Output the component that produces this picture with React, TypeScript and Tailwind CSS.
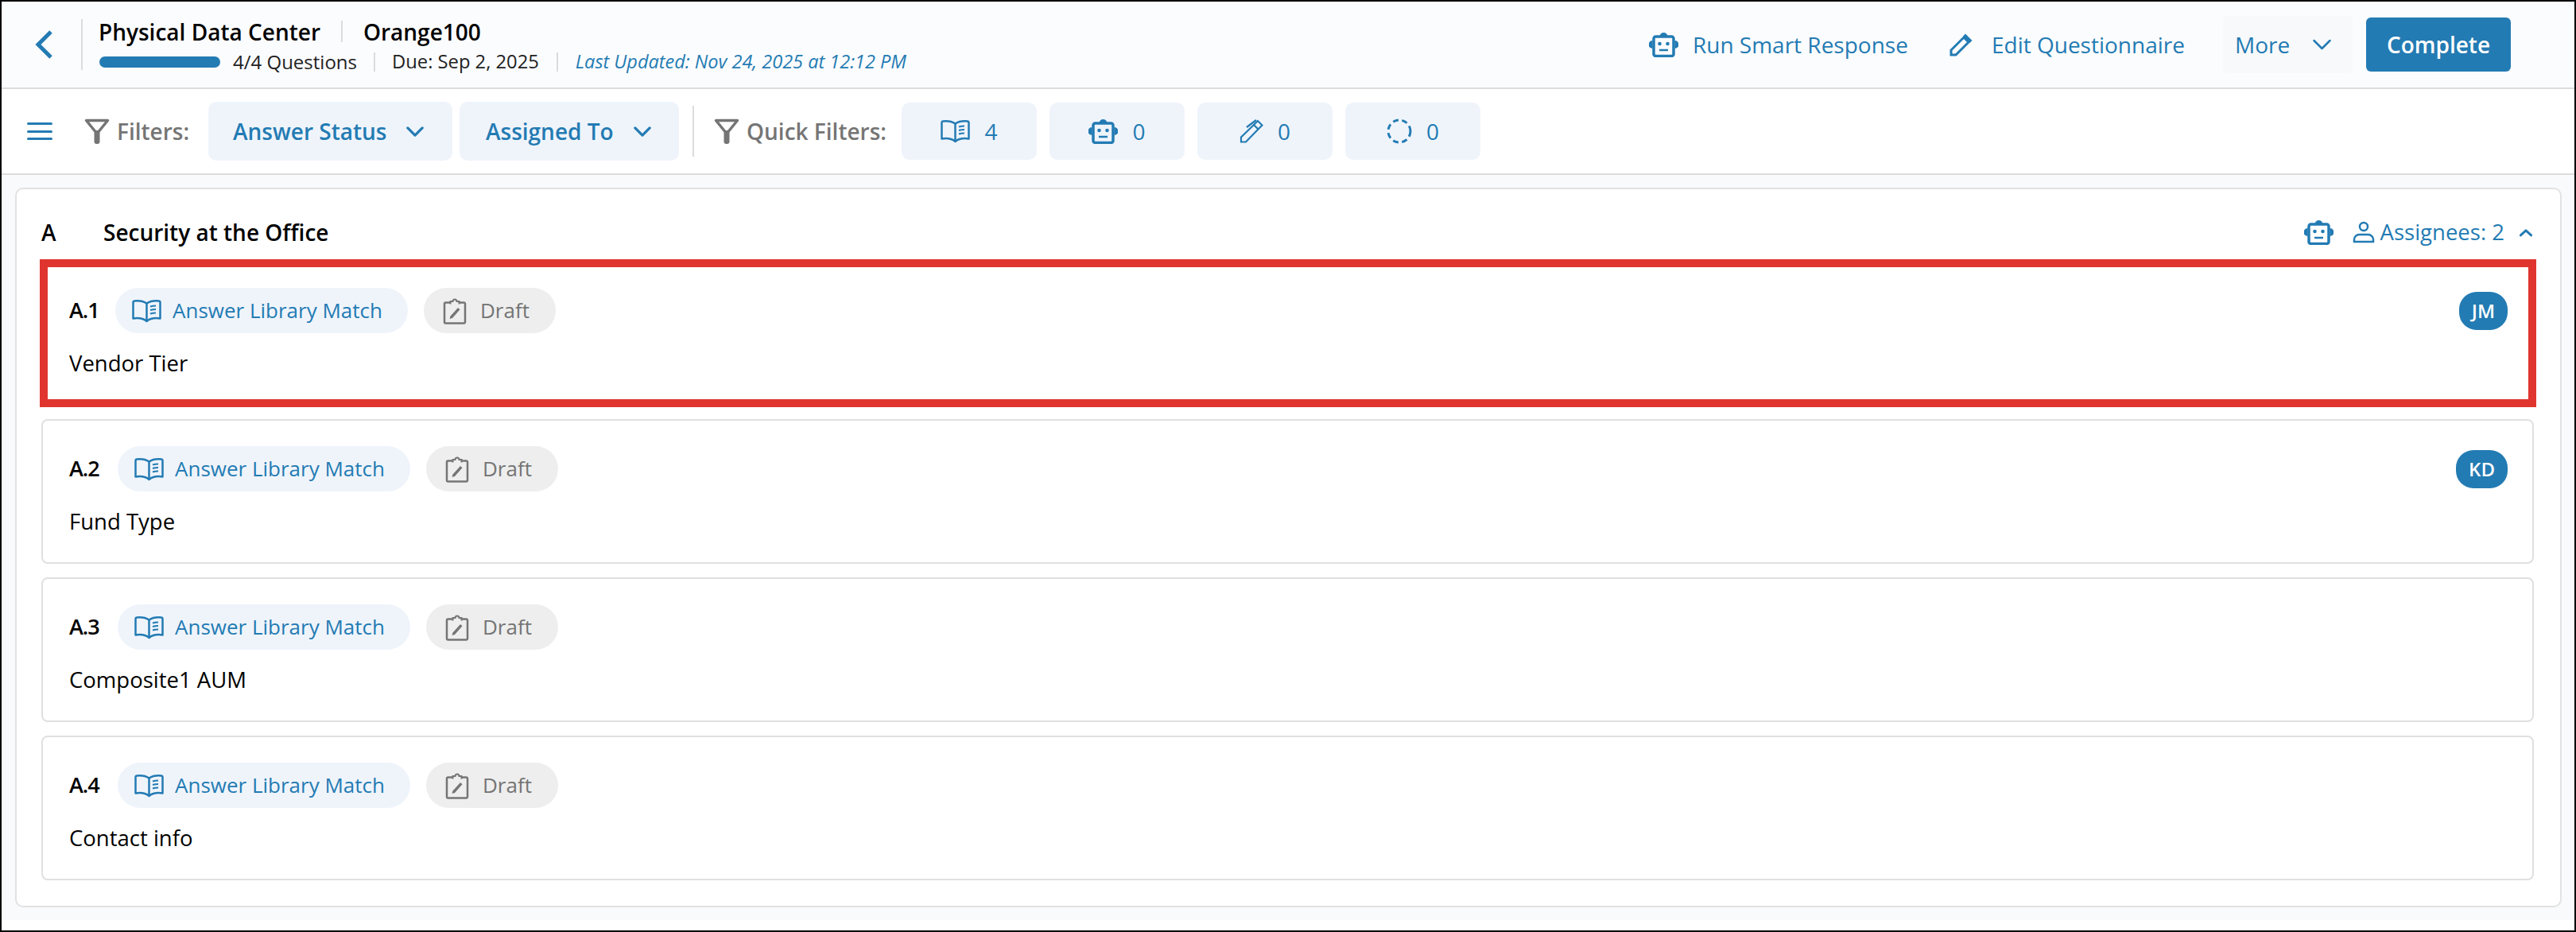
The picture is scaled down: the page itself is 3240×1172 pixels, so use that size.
import type { ReactNode } from "react";

const BLUE = "#237bb3";
const GRAY = "#757575";

function RobotIcon({ className }: { className?: string }) {
  return (
    <svg className={className} viewBox="0 0 37 32" fill="none" stroke={BLUE}>
      <path d="M13.500 6a5 5 0 0 1 10 0z" fill={BLUE} stroke="none" />
      <rect x="6" y="6" width="25" height="24.500" rx="2.500" strokeWidth="3.500" />
      <path d="M4.500 11a5 5 0 0 0 0 10zM32.500 11a5 5 0 0 1 0 10z" fill={BLUE} stroke="none" />
      <circle cx="13.500" cy="15" r="2.300" fill={BLUE} stroke="none" />
      <circle cx="23.500" cy="15" r="2.300" fill={BLUE} stroke="none" />
      <path d="M13 23h11" strokeWidth="2.500" />
    </svg>
  );
}

function BookIcon({ className }: { className?: string }) {
  return (
    <svg className={className} viewBox="0 0 37 30" fill="none" stroke={BLUE} strokeWidth="2.500" strokeLinejoin="round">
      <path d="M18.500 5.500C14 2.500 8 2 3 2.500c-1 .1-1.500.7-1.500 1.500v20.500c5.500-.8 12.500-.3 17 3.500 4.500-3.800 11.500-4.300 17-3.500V4c0-.8-.5-1.400-1.500-1.500-5-.5-11 0-15.500 3z" />
      <path d="M18.500 5.500V28" />
      <path d="M23 9.500c2.200-.8 4.400-1.100 7-1.100M23 14c2.200-.8 4.400-1.100 7-1.100M23 18.500c2.200-.8 4.400-1.100 7-1.100" strokeWidth="2" />
    </svg>
  );
}

function ClipboardIcon({ className }: { className?: string }) {
  return (
    <svg className={className} viewBox="0 0 30 34" fill="none" stroke={GRAY} strokeWidth="2.500">
      <path d="M9.500 6.500H3.500a1.500 1.500 0 0 0-1.500 1.500v23a1.500 1.500 0 0 0 1.500 1.500h23a1.500 1.500 0 0 0 1.500-1.500V8a1.500 1.500 0 0 0-1.500-1.500h-6" />
      <path d="M9.500 8.500V5h3a2.500 2.500 0 0 1 5 0h3v3.500" strokeWidth="2" />
      <path d="M8.500 27l1-3.500L19 13l2.500 2.300L12 26z" fill={GRAY} stroke="none" />
    </svg>
  );
}

function FilterIcon({ className }: { className?: string }) {
  return (
    <svg className={className} viewBox="0 0 32 32" fill="none">
      <path d="M2.500 2.500h27L16 19z" stroke={GRAY} strokeWidth="3.500" strokeLinejoin="round" />
      <rect x="12.500" y="15" width="7" height="17" rx="3" fill={GRAY} />
    </svg>
  );
}

function PencilIcon({ className }: { className?: string }) {
  return (
    <svg className={className} viewBox="0 0 30 30" fill="none" stroke={BLUE} strokeWidth="3">
      <path d="M2 28v-6L18 6l6 6L8 28z" />
      <path d="M20 1.500l8.500 8.500-3 3-8.500-8.500z" fill={BLUE} stroke="none" />
    </svg>
  );
}

function PenIcon({ className }: { className?: string }) {
  return (
    <svg className={className} viewBox="0 0 30 30" fill="none" stroke={BLUE} strokeWidth="2.200">
      <path d="M2 28.500v-6L18 7l5.500 5.500L8 28.500z" />
      <path d="M18 7l5-5 5.500 5.500-5 5" />
      <path d="M9 10L21 1" />
    </svg>
  );
}

function Chevron({ className, up, thin }: { className?: string; up?: boolean; thin?: boolean }) {
  const weight = up ? 4.500 : thin ? 2.500 : 3.500;
  return (
    <svg className={className} viewBox="0 0 24 14" fill="none" stroke={BLUE} strokeWidth={weight} strokeLinecap="round" strokeLinejoin="round">
      <path d={up ? "M2 12L12 3l10 9" : "M2 2l10 10L22 2"} />
    </svg>
  );
}

function AnnotationBox() {
  return <div className="absolute -top-[4px] -right-[5px] -bottom-[4px] -left-[4px] border-[10px] border-[#e0352f]" />;
}

function FilterButton({ label, className }: { label: string; className: string }) {
  return (
    <button className={`flex h-[74px] items-center gap-[25px] rounded-[10px] bg-[#eff4fb] text-[28px] font-semibold text-[#237bb3] ${className}`}>
      {label}
      <Chevron className="h-[13px] w-[22px]" />
    </button>
  );
}

function QuickFilter({ icon, count }: { icon: ReactNode; count: number }) {
  return (
    <button className="flex h-[72px] w-[170px] items-center justify-center gap-[18px] rounded-[10px] bg-[#eff4fb] text-[28px] text-[#237bb3]">
      {icon}
      {count}
    </button>
  );
}

function QuestionRow({
  id,
  title,
  assignee,
  highlighted,
}: {
  id: string;
  title: string;
  assignee?: string;
  highlighted?: boolean;
}) {
  return (
    <div className="relative h-[182px] rounded-[8px] border-2 border-[#e0e0e0] bg-white pt-[32px] pr-[31px] pl-[33px]">
      <div className="flex h-[57px] items-center">
        <span className={`text-[27px] font-semibold tracking-[-1px] text-black ${highlighted ? "w-[58px]" : "w-[61px]"}`}>{id}</span>
        <span className="flex h-[57px] w-[368px] items-center gap-[14px] rounded-full bg-[#eff4fb] pl-[21px] text-[26px] text-[#237bb3]">
          <BookIcon className="h-[30px] w-[37px]" />
          Answer Library Match
        </span>
        <span className="ml-[20px] flex h-[57px] w-[166px] items-center gap-[17px] rounded-full bg-[#eeeeee] pl-[24px] text-[26px] text-[#757575]">
          <ClipboardIcon className="h-[34px] w-[30px]" />
          Draft
        </span>
        {assignee && (
          <span className="ml-auto flex h-[48px] items-center justify-center rounded-[22px] bg-[#237bb3] px-[16px] text-[24px] font-semibold text-white">
            {assignee}
          </span>
        )}
      </div>
      <p className="mt-[20px] h-[36px] text-[27.5px] leading-[36px] text-black">{title}</p>
      {highlighted && <AnnotationBox />}
    </div>
  );
}

export default function App() {
  return (
    <div className="flex h-[1172px] w-[3240px] flex-col border-2 border-black bg-white font-['Open_Sans',sans-serif]">
      {/* Header */}
      <header className="flex h-[110px] shrink-0 items-center border-b-2 border-[#dcdcdc] bg-[#fbfcfe] pr-[80px] pl-[42px]">
        <svg className="h-[36px] w-[23px]" viewBox="0 0 23 36" fill="none" stroke={BLUE} strokeWidth="5">
          <path d="M20 2L4 18l16 16" />
        </svg>
        <div className="ml-[35px] h-[64px] w-[2px] bg-[#dcdcdc]" />
        <div className="ml-[21px] flex flex-col">
          <div className="-ml-[1px] flex h-[36px] items-center text-[28px] font-semibold text-black">
            Physical Data Center
            <span className="mx-[26px] h-[27px] w-[2px] bg-[#dcdcdc]" />
            Orange100
          </div>
          <div className="mt-[7px] flex h-[26px] items-center text-[24px] text-[#222222]">
            <div className="h-[14px] w-[152px] rounded-full bg-[#237bb3]" />
            <span className="ml-[16px]">4/4 Questions</span>
            <span className="mx-[21px] h-[24px] w-[2px] bg-[#dcdcdc]" />
            <span className="text-[23.75px]">Due: Sep 2, 2025</span>
            <span className="mx-[22px] h-[24px] w-[2px] bg-[#dcdcdc]" />
            <span className="text-[23.5px] text-[#237bb3] italic">Last Updated: Nov 24, 2025 at 12:12 PM</span>
          </div>
        </div>
        <div className="ml-auto flex items-center text-[28px] text-[#237bb3]">
          <RobotIcon className="h-[32px] w-[37px]" />
          <span className="ml-[18px]">Run Smart Response</span>
          <PencilIcon className="ml-[52px] h-[30px] w-[30px]" />
          <span className="ml-[23px]">Edit Questionnaire</span>
          <button className="ml-[48px] flex h-[72px] w-[163px] items-center gap-[27px] rounded-[6px] bg-[#f8f9fb] pl-[15px]">
            More
            <Chevron thin className="h-[14px] w-[27px]" />
          </button>
          <button className="ml-[17px] h-[68px] w-[182px] rounded-[6px] bg-[#237bb3] text-[28px] font-semibold text-white">
            Complete
          </button>
        </div>
      </header>

      {/* Filter bar */}
      <div className="flex h-[108px] shrink-0 items-center border-b-2 border-[#dcdcdc] pl-[32px]">
        <div className="flex h-[22px] w-[32px] flex-col justify-between">
          <span className="h-[3px] rounded-full bg-[#237bb3]" />
          <span className="h-[3px] rounded-full bg-[#237bb3]" />
          <span className="h-[3px] rounded-full bg-[#237bb3]" />
        </div>
        <FilterIcon className="ml-[40px] h-[32px] w-[32px]" />
        <span className="ml-[9px] w-[115px] text-[28px] font-semibold text-[#757575]">Filters:</span>
        <FilterButton label="Answer Status" className="w-[307px] pl-[31px]" />
        <FilterButton label="Assigned To" className="ml-[9px] w-[276px] pl-[33px]" />
        <div className="mx-[17px] h-[64px] w-[2px] bg-[#dcdcdc]" />
        <FilterIcon className="ml-[8px] h-[32px] w-[32px]" />
        <span className="ml-[9px] w-[195px] text-[28px] font-semibold text-[#757575]">Quick Filters:</span>
        <div className="flex gap-[16px]">
          <QuickFilter icon={<BookIcon className="h-[30px] w-[37px]" />} count={4} />
          <QuickFilter icon={<RobotIcon className="h-[32px] w-[37px]" />} count={0} />
          <QuickFilter icon={<PenIcon className="h-[30px] w-[30px]" />} count={0} />
          <QuickFilter
            icon={
              <svg className="h-[32px] w-[32px]" viewBox="0 0 32 32" fill="none" stroke={BLUE} strokeWidth="3" strokeDasharray="7 4.500">
                <circle cx="16" cy="16" r="14" />
              </svg>
            }
            count={0}
          />
        </div>
      </div>

      {/* Section */}
      <main className="h-[937px] shrink-0 bg-[#f9fafc] pt-[16px] pr-[16px] pl-[17px]">
        <section className="h-[905px] rounded-[10px] border-2 border-[#e2e2e2] bg-white pr-[33px] pl-[31px]">
          <div className="flex h-[90px] items-center pt-[18px]">
            <span className="w-[78px] text-[28px] font-semibold text-black">A</span>
            <span className="text-[28px] font-semibold text-black">Security at the Office</span>
            <RobotIcon className="ml-auto h-[32px] w-[37px]" />
            <svg className="ml-[24px] h-[28px] w-[28px]" viewBox="0 0 28 28" fill="none" stroke={BLUE} strokeWidth="2.500">
              <circle cx="14" cy="7" r="5" />
              <path d="M2 26v-3c0-3 3-6 6-6h12c3 0 6 3 6 6v3z" />
            </svg>
            <span className="ml-[7px] text-[27.5px] text-[#237bb3]">Assignees: 2</span>
            <Chevron up className="mr-[2px] ml-[19px] h-[11px] w-[16px]" />
          </div>
          <div className="flex flex-col gap-[17px]">
            <QuestionRow id="A.1" title="Vendor Tier" assignee="JM" highlighted />
            <QuestionRow id="A.2" title="Fund Type" assignee="KD" />
            <QuestionRow id="A.3" title="Composite1 AUM" />
            <QuestionRow id="A.4" title="Contact info" />
          </div>
        </section>
      </main>
    </div>
  );
}
